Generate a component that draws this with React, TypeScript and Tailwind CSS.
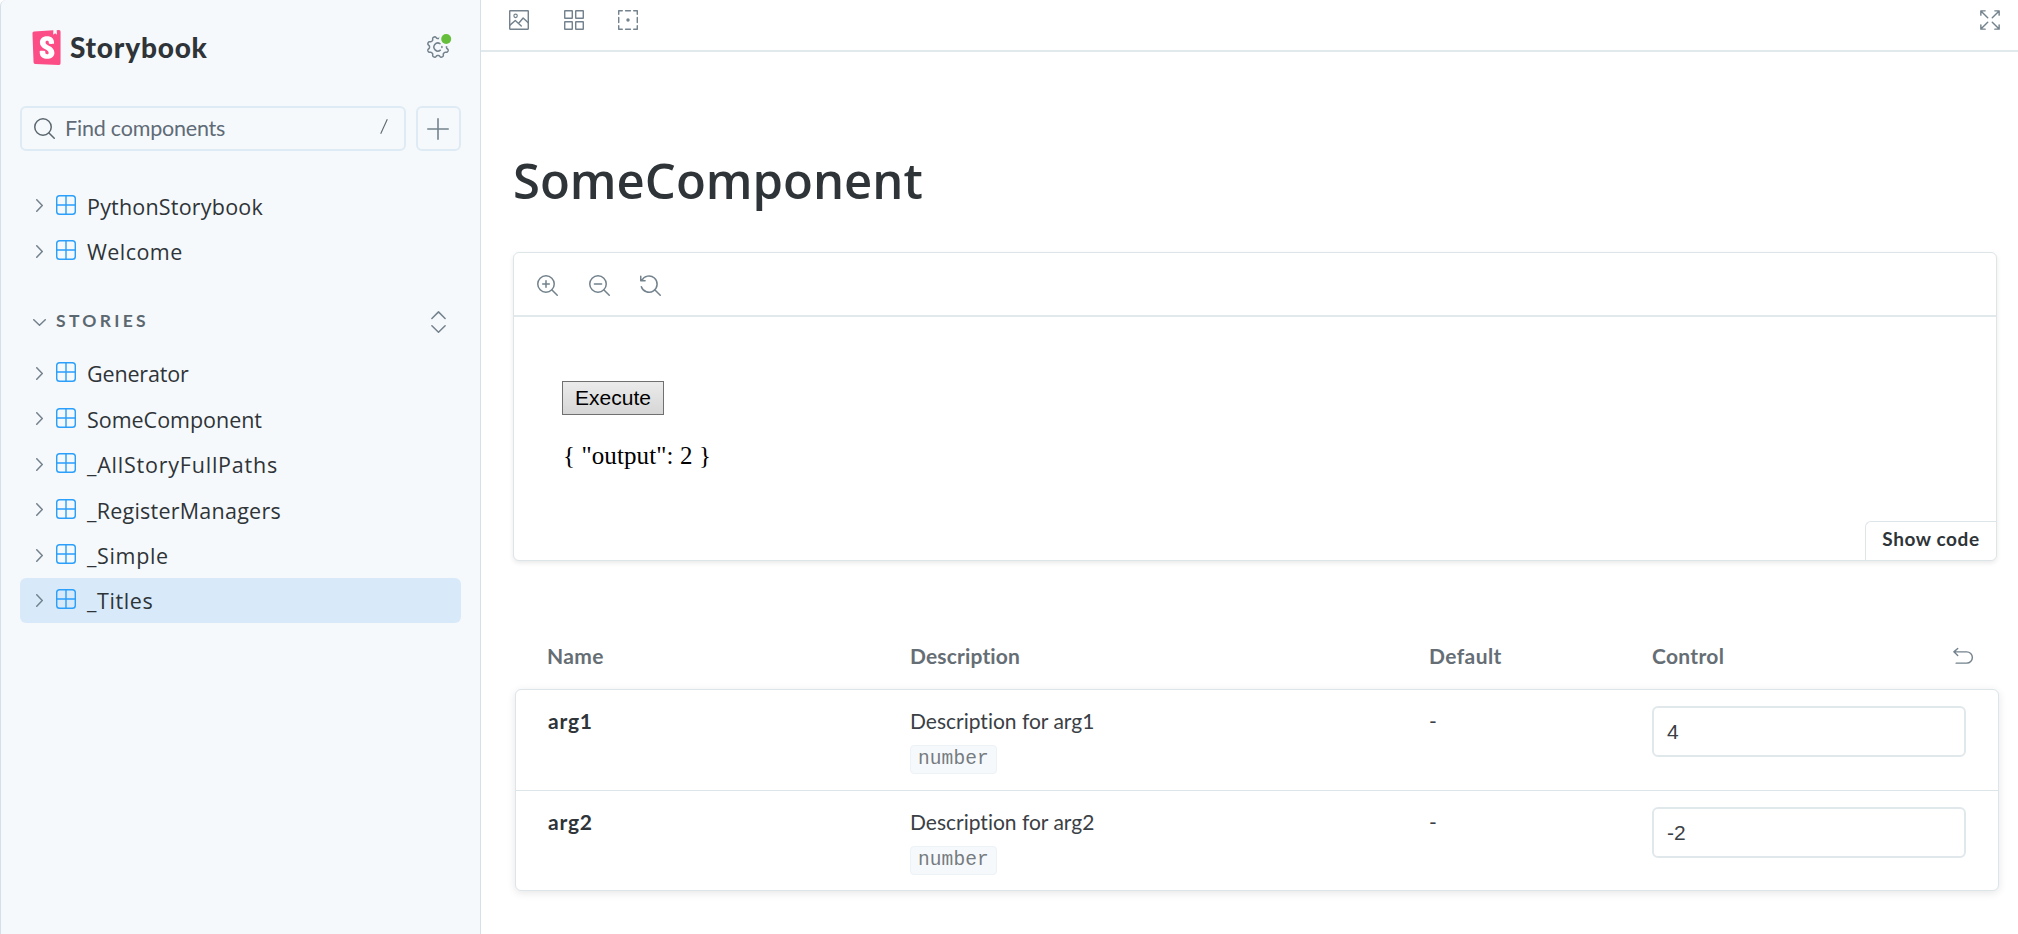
import type { ReactNode } from "react";
import { SiStorybook } from "react-icons/si";

type IconProps = { className?: string; children: ReactNode; sw?: number };

function Icon({ className = "size-5", children, sw = 1 }: IconProps) {
  return (
    <svg
      viewBox="0 0 14 14"
      fill="none"
      stroke="currentColor"
      strokeWidth={sw}
      strokeLinecap="round"
      strokeLinejoin="round"
      className={`shrink-0 overflow-visible ${className}`}
    >
      {children}
    </svg>
  );
}

const ChevronRight = () => (
  <svg viewBox="0 0 7 13" fill="none" stroke="#73828c" strokeWidth="1.5" strokeLinecap="round" strokeLinejoin="round" className="h-[13px] w-[7px] shrink-0">
    <path d="M.75 .75L6.25 6.5L.75 12.25" />
  </svg>
);

const ComponentIcon = () => (
  <Icon className="size-5 text-[#2a9ffb]">
    <rect x=".5" y=".5" width="13" height="13" rx="2" />
    <path d="M7 .5v13M.5 7h13" />
  </Icon>
);

// Eight-lobed outline of the settings cog, centred in a 24x24 box.
const cogPath =
  Array.from({ length: 160 }, (_, i) => {
    const a = (i / 160) * Math.PI * 2;
    const wave = Math.cos(8 * (a - Math.PI / 8));
    const r = 9.6 + 1.2 * Math.tanh(1.8 * wave);
    return `${i ? "L" : "M"}${(12 + r * Math.cos(a)).toFixed(2)} ${(12 + r * Math.sin(a)).toFixed(2)}`;
  }).join("") + "Z";

const CogIcon = () => (
  <svg viewBox="0 0 24 24" className="size-6 overflow-visible">
    <mask id="cog-cut">
      <rect x="-2" y="-2" width="28" height="28" fill="white" />
      <circle cx="20.2" cy="4" r="7.2" fill="black" />
    </mask>
    <g mask="url(#cog-cut)" stroke="#73828c" strokeWidth="1.5" fill="none" strokeLinecap="round">
      <path d={cogPath} />
    </g>
    <path d="M14 8.6A4 4 0 1 0 14.4 15.2M15.9 11.4V12.6" stroke="#73828c" strokeWidth="1.5" fill="none" strokeLinecap="round" />
    <circle cx="20.2" cy="4" r="5" fill="#66bf3c" />
  </svg>
);

function TreeItem({ label, spacing, active }: { label: string; spacing: string; active?: boolean }) {
  return (
    <div className={`flex h-[45.4px] items-center rounded-md pl-4 ${active ? "bg-[#d8eafa]" : ""}`}>
      <ChevronRight />
      <span className="ml-[13px] flex -translate-y-px">
        <ComponentIcon />
      </span>
      <span className={`mt-0.5 ml-[11px] font-['Open_Sans',sans-serif] text-[21.5px] leading-[30px] text-[#2e3438] ${spacing}`}>{label}</span>
    </div>
  );
}

function Sidebar() {
  return (
    <aside className="flex w-[481px] shrink-0 flex-col rounded-tl-md border-x border-[#d6e0ea] bg-[#f6f9fc] px-[19px]">
      <header className="flex h-[106px] items-start justify-between pt-[30px] pr-[11px] pl-[9px]">
        <div className="flex items-center">
          <span className="flex bg-[linear-gradient(white,white)] bg-[length:18px_26px] bg-center bg-no-repeat">
            <SiStorybook className="size-[35px] text-[#fd4d86]" />
          </span>
          <span className="ml-[6px] text-[28px] leading-[35px] font-black tracking-[0.8px] text-[#2e3438]">Storybook</span>
        </div>
        <div className="pt-[5px]">
          <CogIcon />
        </div>
      </header>

      <div className="flex gap-2.5">
        <div className="flex h-[45px] w-[386px] items-center rounded-md border-2 border-[#dfebf4] pr-4 pl-[12px]">
          <Icon className="size-[21px] text-[#5c6870]">
            <circle cx="6" cy="6" r="5.5" />
            <path d="M10 10l3.5 3.5" />
          </Icon>
          <span className="ml-2.5 flex-1 text-[21.5px] tracking-[-0.2px] text-[#5f6b77]">Find components</span>
          <svg viewBox="0 0 8 15" className="mb-1 h-[15px] w-2" fill="none" stroke="#5c6870" strokeWidth="1.1">
            <path d="M7.3 .3L.7 14.7" />
          </svg>
        </div>
        <div className="flex size-[45px] items-center justify-center rounded-md border-2 border-[#dfebf4] text-[#73828c]">
          <Icon className="size-[22px] -translate-x-px">
            <path d="M7 .5v13M.5 7h13" />
          </Icon>
        </div>
      </div>

      <nav className="mt-[32px] flex flex-col">
        <TreeItem label="PythonStorybook" spacing="tracking-[0.2px]" />
        <TreeItem label="Welcome" spacing="tracking-[0.45px]" />
      </nav>

      <div className="mt-[24px] flex h-[45px] items-center pr-[15px] pl-[13px] text-[#73828c]">
        <svg viewBox="0 0 13 7" fill="none" stroke="currentColor" strokeWidth="1.5" strokeLinecap="round" strokeLinejoin="round" className="mt-1 h-[7px] w-[13px]">
          <path d="M.75 .75L6.5 6.25L12.25 .75" />
        </svg>
        <span className="mt-0.5 ml-[10px] flex-1 text-[17.5px] font-bold tracking-[3.3px] text-[#5c6870]">STORIES</span>
        <svg viewBox="0 0 15 22" fill="none" stroke="currentColor" strokeWidth="1.5" strokeLinecap="round" strokeLinejoin="round" className="mt-[3px] h-[22px] w-[15px]">
          <path d="M.9 7.5L7.5 .9L14.1 7.5M.9 14.7L7.5 21.2L14.1 14.7" />
        </svg>
      </div>

      <nav className="mt-[8px] flex flex-col">
        <TreeItem label="Generator" spacing="tracking-[-0.15px]" />
        <TreeItem label="SomeComponent" spacing="tracking-[-0.02px]" />
        <TreeItem label="_AllStoryFullPaths" spacing="tracking-[0.78px]" />
        <TreeItem label="_RegisterManagers" spacing="tracking-[0.24px]" />
        <TreeItem label="_Simple" spacing="tracking-[0.65px]" />
        <TreeItem label="_Titles" spacing="tracking-[0.6px]" active />
      </nav>
    </aside>
  );
}

function Toolbar() {
  return (
    <div className="flex h-[52px] items-start border-b-2 border-[#e2e9ed] pt-2.5 pr-[18px] pl-7 text-[#73828c]">
      <Icon>
        <rect x=".5" y=".5" width="13" height="13" rx=".3" />
        <circle cx="4.6" cy="4.1" r="1.2" strokeWidth=".8" />
        <path d="M.7 10.6L4.4 7.4L8.6 11.2M6.8 9.3L9.9 5.6L13.3 8.8" />
      </Icon>
      <Icon className="ml-[35px] size-5">
        <rect x=".5" y=".5" width="5.3" height="5.3" rx=".2" />
        <rect x="8.2" y=".5" width="5.3" height="5.3" rx=".2" />
        <rect x=".5" y="8.2" width="5.3" height="5.3" rx=".2" />
        <rect x="8.2" y="8.2" width="5.3" height="5.3" rx=".2" />
      </Icon>
      <Icon className="ml-[34px] size-5">
        <path d="M.5 3V.5H3M11 .5h2.5V3M13.5 11v2.5H11M3 13.5H.5V11M5.3 .5h3.4M5.3 13.5h3.4M.5 5.3v3.4M13.5 5.3v3.4" />
        <circle cx="7" cy="7" r=".7" fill="currentColor" />
      </Icon>
      <Icon className="ml-auto size-5">
        <path d="M.6 3.6V.6h3M.8 .8L5.4 5.4M10.4 .6h3v3M13.2 .8L8.6 5.4M.6 10.4v3h3M.8 13.2L5.4 8.6M13.4 10.4v3h-3M13.2 13.2L8.6 8.6" />
      </Icon>
    </div>
  );
}

function Preview() {
  return (
    <section className="mt-[41px] ml-8 flex h-[309px] w-[1484px] flex-col rounded-md border border-[#dde5e9] bg-white shadow-[0_2px_5px_rgba(0,0,0,0.09)]">
      <div className="flex h-[64px] items-center gap-[31px] border-b-2 border-[#e2e9ed] pt-0.5 pl-[23px] text-[#73828c]">
        <Icon className="size-[21px]">
          <circle cx="6" cy="6" r="5.5" />
          <path d="M10 10l3.5 3.5M6 3.8v4.4M3.8 6h4.4" />
        </Icon>
        <Icon className="size-[21px]">
          <circle cx="6" cy="6" r="5.5" />
          <path d="M10 10l3.5 3.5M3.6 6h4.8" />
        </Icon>
        <Icon className="-ml-px size-[21px]">
          <path d="M1.2 3.6A5.4 5.4 0 1 1 .9 7.8M.5 .9V3.8H3.4M10 10l3.5 3.5" />
        </Icon>
      </div>
      <div className="flex-1 pt-[64px] pl-12">
        <button className="block h-[34px] w-[102px] border border-[#707070] bg-linear-to-b from-[#ebebeb] to-[#d6d6d6] font-['Liberation_Sans',sans-serif] text-[21px] leading-[30px] text-black">
          Execute
        </button>
        <p className="mt-[27px] pl-px font-['Liberation_Serif',serif] text-[25px] leading-[28px] tracking-[0.1px] text-black">{'{ "output": 2 }'}</p>
      </div>
      <button className="h-[39px] w-[131px] self-end rounded-tl-md rounded-br-md border-t border-l border-[#dde5e9] bg-white pb-1 text-[19px] font-bold tracking-[0.6px] text-[#2e3438]">
        Show code
      </button>
    </section>
  );
}

const columns = "grid grid-cols-[363px_519px_223px_1fr]";

function ArgRow({ name, description, value }: { name: string; description: string; value: string }) {
  return (
    <div className={`${columns} h-[101px] pt-[15px] pr-8 pl-[31px] text-[21px] leading-[32px] text-[#3a4045] last:h-[99px]`}>
      <span className="pl-px font-bold tracking-[0.8px] text-[#2e3438]">{name}</span>
      <div className="flex flex-col items-start">
        <span>{description}</span>
        <code className="mt-[8px] h-[29px] rounded border border-[#ecf2f6] bg-[#f6f9fc] px-[7px] font-['Liberation_Mono',monospace] text-[19.5px] leading-[27px] tracking-[0.1px] text-[#767c80]">
          number
        </code>
      </div>
      <span>-</span>
      <div className="mt-px flex h-[51px] w-[314px] items-center rounded-md border-2 border-[#e1e8ec] pl-[13px] font-['Liberation_Sans',sans-serif]">
        {value}
      </div>
    </div>
  );
}

function ArgsTable() {
  return (
    <section className="mt-[75px] ml-[34px] w-[1484px]">
      <div className={`${columns} h-[53px] pr-[26px] pl-8 text-[21px] leading-[40px] font-bold text-[#666e75]`}>
        <span className="tracking-[0.4px]">Name</span>
        <span className="tracking-[0.15px]">Description</span>
        <span className="tracking-[0.4px]">Default</span>
        <div className="flex justify-between">
          <span className="tracking-[0.3px]">Control</span>
          <Icon className="mt-[11px] size-5 text-[#73828c]">
            <path d="M3.3 1L.6 3.4L3.3 6M.8 3.4H9.6A3.9 3.9 0 0 1 9.6 11.3H2.2" />
          </Icon>
        </div>
      </div>
      <div className="divide-y divide-[#dde5e9] rounded-md border border-[#dde5e9] bg-white shadow-[0_2px_8px_rgba(0,0,0,0.10)]">
        <ArgRow name="arg1" description="Description for arg1" value="4" />
        <ArgRow name="arg2" description="Description for arg2" value="-2" />
      </div>
    </section>
  );
}

export default function App() {
  return (
    <div className="flex h-[934px] w-[2018px] overflow-hidden bg-white font-['Lato',sans-serif] [font-variant-ligatures:none]">
      <Sidebar />
      <main className="flex min-w-0 flex-1 flex-col">
        <Toolbar />
        <h1 className="mt-[98px] mb-px ml-8 h-[60px] font-['Open_Sans',sans-serif] text-[49px] leading-[60px] font-semibold text-[#2e3438]">
          SomeComponent
        </h1>
        <Preview />
        <ArgsTable />
      </main>
    </div>
  );
}
